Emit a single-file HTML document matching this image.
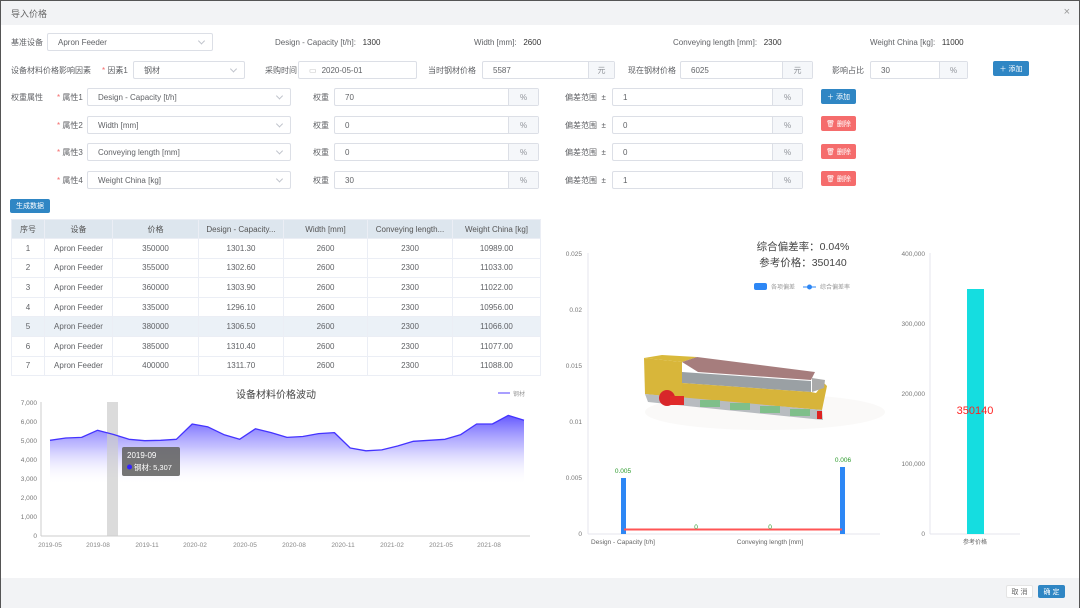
<!DOCTYPE html>
<html><head><meta charset="utf-8">
<style>
*{box-sizing:border-box;margin:0;padding:0}
body{width:1080px;height:608px;background:#fff;font-family:"Liberation Sans","Noto Sans CJK SC",sans-serif;font-size:8px;color:#555;position:relative;overflow:hidden}
.a{position:absolute}
.frame{position:absolute;left:0;top:0;width:1080px;height:608px;border:1px solid #555;border-bottom:none}
.hd{left:1px;top:1px;width:1078px;height:24px;background:#f2f3f5;font-size:9px;color:#666;padding:6px 10px}
.ft{left:1px;top:578px;width:1078px;height:30px;background:#f2f3f5}
.box{position:absolute;border:1px solid #dcdfe6;background:#fff;border-radius:2px;font-size:8px;color:#606266;padding:0 0 0 10px;display:flex;align-items:center}
.ad{position:absolute;top:0;right:0;height:100%;background:#f5f7fa;border-left:1px solid #dcdfe6;display:flex;align-items:center;justify-content:center;color:#909399}
.ch{position:absolute;right:8px;top:50%;width:5px;height:5px;border-right:1px solid #c0c4cc;border-bottom:1px solid #c0c4cc;transform:translateY(-70%) rotate(45deg)}
.lb{position:absolute;font-size:8px;line-height:9px;color:#606266;white-space:nowrap}
.st{color:#f56c6c}
.btn{position:absolute;color:#fff;font-size:7px;border-radius:2px;display:flex;align-items:center;justify-content:center}
.bl{background:#2f86c4}.rd{background:#f56c6c}
table{position:absolute;left:11px;top:219px;width:529px;border-collapse:collapse;font-size:8px;color:#606266;table-layout:fixed}
td,th{border:1px solid #ebeef5;text-align:center;height:19.6px;font-weight:normal;white-space:nowrap;overflow:hidden}
th{background:#dde6ee;color:#555;height:19px}
tr.hl td{background:#ebf1f7}
</style></head><body>
<div class="frame"></div>
<div class="a hd">导入价格</div>
<div class="a" style="right:10px;top:6px;font-size:11px;color:#999">×</div>

<div class="lb" style="left:11px;top:38px">基准设备</div>
<div class="box" style="left:47px;top:33px;width:166px;height:18px">Apron Feeder<i class="ch"></i></div>
<div class="lb" style="left:275px;top:38px">Design - Capacity [t/h]:&nbsp;&nbsp; <span style="color:#333">1300</span></div>
<div class="lb" style="left:474px;top:38px">Width [mm]:&nbsp;&nbsp; <span style="color:#333">2600</span></div>
<div class="lb" style="left:673px;top:38px">Conveying length [mm]:&nbsp;&nbsp; <span style="color:#333">2300</span></div>
<div class="lb" style="left:870px;top:38px">Weight China [kg]:&nbsp;&nbsp; <span style="color:#333">11000</span></div>

<div class="lb" style="left:11px;top:66px">设备材料价格影响因素</div>
<div class="lb" style="left:102px;top:66px"><span class="st">*</span> 因素1</div>
<div class="box" style="left:133px;top:61px;width:112px;height:18px">钢材<i class="ch"></i></div>
<div class="lb" style="left:265px;top:66px">采购时间</div>
<div class="box" style="left:298px;top:61px;width:119px;height:18px;color:#606266"><span style="color:#bbb;margin-right:5px">▭</span>2020-05-01</div>
<div class="lb" style="left:428px;top:66px">当时钢材价格</div>
<div class="box" style="left:482px;top:61px;width:133px;height:18px">5587<span class="ad" style="width:26px">元</span></div>
<div class="lb" style="left:628px;top:66px">现在钢材价格</div>
<div class="box" style="left:680px;top:61px;width:133px;height:18px">6025<span class="ad" style="width:30px">元</span></div>
<div class="lb" style="left:832px;top:66px">影响占比</div>
<div class="box" style="left:870px;top:61px;width:98px;height:18px">30<span class="ad" style="width:28px">%</span></div>
<div class="btn bl" style="left:993px;top:61px;width:36px;height:15px">＋ 添加</div>

<div class="lb" style="left:11px;top:93px">权重属性</div>

<div class="lb" style="left:57px;top:93px"><span class="st">*</span> 属性1</div>
<div class="box" style="left:87px;top:88px;width:204px;height:18px">Design - Capacity [t/h]<i class="ch"></i></div>
<div class="lb" style="left:313px;top:93px">权重</div>
<div class="box" style="left:334px;top:88px;width:205px;height:18px">70<span class="ad" style="width:30px">%</span></div>
<div class="lb" style="left:565px;top:93px">偏差范围 &nbsp;±</div>
<div class="box" style="left:612px;top:88px;width:191px;height:18px">1<span class="ad" style="width:30px">%</span></div>
<div class="btn bl" style="left:821px;top:89px;width:35px;height:15px">＋ 添加</div>

<div class="lb" style="left:57px;top:121px"><span class="st">*</span> 属性2</div>
<div class="box" style="left:87px;top:116px;width:204px;height:18px">Width [mm]<i class="ch"></i></div>
<div class="lb" style="left:313px;top:121px">权重</div>
<div class="box" style="left:334px;top:116px;width:205px;height:18px">0<span class="ad" style="width:30px">%</span></div>
<div class="lb" style="left:565px;top:121px">偏差范围 &nbsp;±</div>
<div class="box" style="left:612px;top:116px;width:191px;height:18px">0<span class="ad" style="width:30px">%</span></div>
<div class="btn rd" style="left:821px;top:116px;width:35px;height:15px">🗑 删除</div>

<div class="lb" style="left:57px;top:148px"><span class="st">*</span> 属性3</div>
<div class="box" style="left:87px;top:143px;width:204px;height:18px">Conveying length [mm]<i class="ch"></i></div>
<div class="lb" style="left:313px;top:148px">权重</div>
<div class="box" style="left:334px;top:143px;width:205px;height:18px">0<span class="ad" style="width:30px">%</span></div>
<div class="lb" style="left:565px;top:148px">偏差范围 &nbsp;±</div>
<div class="box" style="left:612px;top:143px;width:191px;height:18px">0<span class="ad" style="width:30px">%</span></div>
<div class="btn rd" style="left:821px;top:144px;width:35px;height:15px">🗑 删除</div>

<div class="lb" style="left:57px;top:176px"><span class="st">*</span> 属性4</div>
<div class="box" style="left:87px;top:171px;width:204px;height:18px">Weight China [kg]<i class="ch"></i></div>
<div class="lb" style="left:313px;top:176px">权重</div>
<div class="box" style="left:334px;top:171px;width:205px;height:18px">30<span class="ad" style="width:30px">%</span></div>
<div class="lb" style="left:565px;top:176px">偏差范围 &nbsp;±</div>
<div class="box" style="left:612px;top:171px;width:191px;height:18px">1<span class="ad" style="width:30px">%</span></div>
<div class="btn rd" style="left:821px;top:171px;width:35px;height:15px">🗑 删除</div>

<div class="btn bl" style="left:10px;top:199px;width:40px;height:14px">生成数据</div>

<table>
<colgroup><col style="width:33px"><col style="width:68px"><col style="width:86px"><col style="width:85px"><col style="width:84px"><col style="width:85px"><col style="width:88px"></colgroup>
<tr><th>序号</th><th>设备</th><th>价格</th><th>Design - Capacity...</th><th>Width [mm]</th><th>Conveying length...</th><th>Weight China [kg]</th></tr>
<tr><td>1</td><td>Apron Feeder</td><td>350000</td><td>1301.30</td><td>2600</td><td>2300</td><td>10989.00</td></tr>
<tr><td>2</td><td>Apron Feeder</td><td>355000</td><td>1302.60</td><td>2600</td><td>2300</td><td>11033.00</td></tr>
<tr><td>3</td><td>Apron Feeder</td><td>360000</td><td>1303.90</td><td>2600</td><td>2300</td><td>11022.00</td></tr>
<tr><td>4</td><td>Apron Feeder</td><td>335000</td><td>1296.10</td><td>2600</td><td>2300</td><td>10956.00</td></tr>
<tr class="hl"><td>5</td><td>Apron Feeder</td><td>380000</td><td>1306.50</td><td>2600</td><td>2300</td><td>11066.00</td></tr>
<tr><td>6</td><td>Apron Feeder</td><td>385000</td><td>1310.40</td><td>2600</td><td>2300</td><td>11077.00</td></tr>
<tr><td>7</td><td>Apron Feeder</td><td>400000</td><td>1311.70</td><td>2600</td><td>2300</td><td>11088.00</td></tr>
</table>

<svg class="a" style="left:0;top:380px" width="545" height="180" viewBox="0 380 545 180" font-family="Liberation Sans, Noto Sans CJK SC, sans-serif">
<defs><linearGradient id="g" gradientUnits="userSpaceOnUse" x1="0" y1="415" x2="0" y2="485"><stop offset="0" stop-color="#5a4dff" stop-opacity=".95"/><stop offset=".45" stop-color="#9d95ff" stop-opacity=".6"/><stop offset="1" stop-color="#fff" stop-opacity="0"/></linearGradient></defs>
<text x="276" y="398" font-size="10" fill="#444" text-anchor="middle">设备材料价格波动</text>
<line x1="498" y1="393" x2="510" y2="393" stroke="#a99fff" stroke-width="2"/><text x="513" y="396" font-size="6" fill="#999">钢材</text>
<g font-size="6.5" fill="#777" text-anchor="end">
<text x="37" y="405">7,000</text><text x="37" y="424">6,000</text><text x="37" y="443">5,000</text><text x="37" y="462">4,000</text><text x="37" y="481">3,000</text><text x="37" y="500">2,000</text><text x="37" y="519">1,000</text><text x="37" y="538">0</text></g>
<line x1="41" y1="402" x2="41" y2="536" stroke="#ccc"/>
<line x1="41" y1="536" x2="530" y2="536" stroke="#ccc"/>
<path d="M50,440.3 L65.8,438 81.6,437.4 97.4,430.3 113.2,434.4 129,439.3 144.8,440.7 160.6,440.3 176.4,439.3 192.2,424 208,426.9 223.8,434.6 239.6,439.3 255.4,428.8 271.2,432.6 287,437.4 302.8,436.5 318.6,433.6 334.4,432.6 350.2,448 366,450.8 381.8,449.9 397.6,446 413.4,441.3 429.2,440.3 445,439.3 460.8,434.6 476.6,424 492.4,424 508.2,415.4 524,420.2 L524,536 L50,536Z" fill="url(#g)" stroke="none"/>
<rect x="107" y="402" width="11" height="134" fill="#ccc" fill-opacity=".7"/>
<path d="M50,440.3 L65.8,438 81.6,437.4 97.4,430.3 113.2,434.4 129,439.3 144.8,440.7 160.6,440.3 176.4,439.3 192.2,424 208,426.9 223.8,434.6 239.6,439.3 255.4,428.8 271.2,432.6 287,437.4 302.8,436.5 318.6,433.6 334.4,432.6 350.2,448 366,450.8 381.8,449.9 397.6,446 413.4,441.3 429.2,440.3 445,439.3 460.8,434.6 476.6,424 492.4,424 508.2,415.4 524,420.2" fill="none" stroke="#4433ff" stroke-width="1.3" stroke-linejoin="round"/>
<rect x="122" y="447" width="58" height="29" rx="2" fill="#666" fill-opacity=".9"/>
<text x="127" y="458" font-size="8" fill="#fff">2019-09</text>
<circle cx="129.5" cy="467" r="2.5" fill="#3322ff"/><text x="134" y="470" font-size="7.5" fill="#fff">钢材: 5,307</text>
<g font-size="6.5" fill="#888" text-anchor="middle">
<text x="50" y="547">2019-05</text><text x="98" y="547">2019-08</text><text x="147" y="547">2019-11</text><text x="195" y="547">2020-02</text><text x="245" y="547">2020-05</text><text x="294" y="547">2020-08</text><text x="343" y="547">2020-11</text><text x="392" y="547">2021-02</text><text x="441" y="547">2021-05</text><text x="489" y="547">2021-08</text></g>
</svg>

<svg class="a" style="left:555px;top:230px" width="525" height="330" viewBox="555 230 525 330" font-family="Liberation Sans, Noto Sans CJK SC, sans-serif">
<text x="803" y="250" font-size="10.5" fill="#444" text-anchor="middle">综合偏差率：0.04%</text>
<text x="803" y="266" font-size="10.5" fill="#444" text-anchor="middle">参考价格：350140</text>
<rect x="754" y="283" width="13" height="7" rx="2" fill="#2d87f5"/><text x="771" y="289" font-size="6" fill="#999">各项偏差</text>
<line x1="803" y1="287" x2="816" y2="287" stroke="#2d87f5"/><circle cx="809.5" cy="287" r="2.5" fill="#2d87f5"/><text x="820" y="289" font-size="6" fill="#999">综合偏差率</text>
<g font-size="6.5" fill="#777" text-anchor="end">
<text x="582" y="256">0.025</text><text x="582" y="312">0.02</text><text x="582" y="368">0.015</text><text x="582" y="424">0.01</text><text x="582" y="480">0.005</text><text x="582" y="536">0</text></g>
<line x1="588" y1="253" x2="588" y2="534" stroke="#e4e4ee"/>
<line x1="588" y1="534" x2="880" y2="534" stroke="#e4e4ee"/>
<!-- feeder -->
<ellipse cx="765" cy="412" rx="120" ry="18" fill="#f6f4f2" opacity=".5"/>
<polygon points="644,358 662,355 697,357 682,362" fill="#d9b93b"/>
<polygon points="644,358 682,362 682,398 645,394" fill="#d8b63a"/>
<polygon points="682,362 697,357 815,372 811,380 698,372" fill="#a67d7d"/>
<polygon points="682,372 811,381 811,392 682,383" fill="#9aa0a4"/>
<polygon points="682,383 811,392 816,393 824,383 827,386 822,410 682,398" fill="#d7b43a"/>
<polygon points="812,378 825,380 824,388 812,392" fill="#aaa"/>
<polygon points="645,394 822,410 823,420 648,402" fill="#b8bcc0"/>
<rect x="700" y="400" width="20" height="7" fill="#7fbf8a"/><rect x="730" y="403" width="20" height="7" fill="#7fbf8a"/><rect x="760" y="406" width="20" height="7" fill="#7fbf8a"/><rect x="790" y="409" width="20" height="7" fill="#7fbf8a"/>
<circle cx="667" cy="398" r="8" fill="#d8262a"/><rect x="670" y="396" width="14" height="9" fill="#e02a2a"/>
<rect x="817" y="411" width="5" height="8" fill="#d22"/>
<!-- bars -->
<rect x="621" y="478" width="5" height="56" fill="#2d87f5"/>
<rect x="840" y="467" width="5" height="67" fill="#2d87f5"/>
<line x1="624" y1="529.5" x2="842" y2="529.5" stroke="#f55" stroke-width="2"/>
<g font-size="6.5" fill="#2a9a2a" text-anchor="middle"><text x="623" y="473">0.005</text><text x="843" y="462">0.006</text><text x="696" y="529">0</text><text x="770" y="529">0</text></g>
<g font-size="6.5" fill="#666" text-anchor="middle"><text x="623" y="544">Design - Capacity [t/h]</text><text x="770" y="544">Conveying length [mm]</text></g>
<!-- right -->
<g font-size="6.5" fill="#777" text-anchor="end">
<text x="925" y="256">400,000</text><text x="925" y="326">300,000</text><text x="925" y="396">200,000</text><text x="925" y="466">100,000</text><text x="925" y="536">0</text></g>
<line x1="930" y1="253" x2="930" y2="534" stroke="#e4e4ee"/>
<line x1="930" y1="534" x2="1020" y2="534" stroke="#e4e4ee"/>
<rect x="967" y="289" width="17" height="245" fill="#15dde0"/>
<text x="975" y="414" font-size="11" fill="#f22" text-anchor="middle">350140</text>
<text x="975" y="544" font-size="6" fill="#666" text-anchor="middle">参考价格</text>
</svg>

<div class="a ft"></div>
<div class="btn" style="left:1006px;top:585px;width:27px;height:13px;background:#fff;border:1px solid #e4e4e4;color:#666">取 消</div>
<div class="btn bl" style="left:1038px;top:585px;width:27px;height:13px">确 定</div>
</body></html>
